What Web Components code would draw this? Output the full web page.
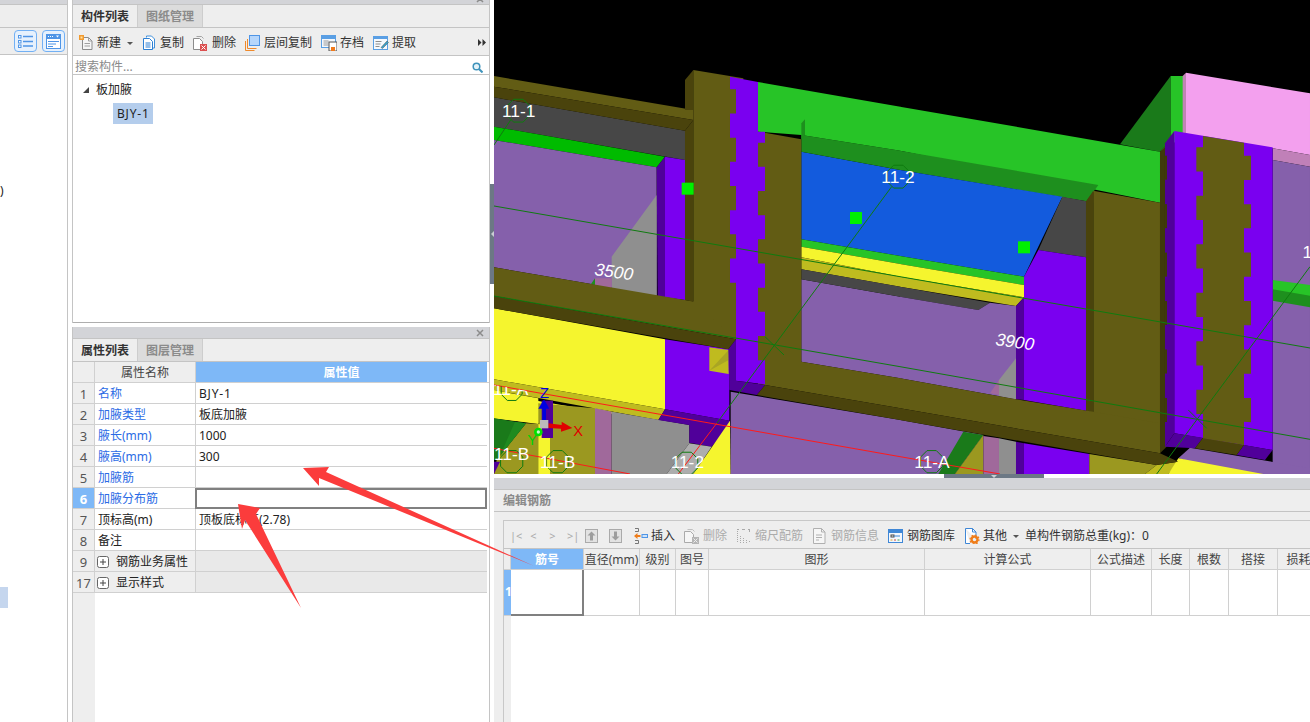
<!DOCTYPE html>
<html lang="zh">
<head>
<meta charset="utf-8">
<title>编辑钢筋</title>
<style>
  html, body { margin: 0; height: 100%; overflow: hidden; background: #fff; }
  body { font: 12px/1 "Noto Sans", "Noto Sans CJK SC", sans-serif; color: #222; }
</style>
</head>
<body>

<app-shell>
  <left-rail slot="rail"></left-rail>

  <dock-panel slot="comp" closable>
    <tab-strip first="构件列表" second="图纸管理"></tab-strip>
    <tool-bar>
      <tb-btn icon="new" arrow>新建</tb-btn>
      <tb-btn icon="copy">复制</tb-btn>
      <tb-btn icon="del">删除</tb-btn>
      <tb-btn icon="layer">层间复制</tb-btn>
      <tb-btn icon="save">存档</tb-btn>
      <tb-btn icon="extract">提取</tb-btn>
    </tool-bar>
    <search-box placeholder="搜索构件..."></search-box>
    <comp-tree></comp-tree>
  </dock-panel>

  <dock-panel slot="props" closable>
    <tab-strip first="属性列表" second="图层管理"></tab-strip>
    <prop-table>
      <prop-row num="1" label="名称" link><span style="letter-spacing:.8px">BJY-1</span></prop-row>
      <prop-row num="2" label="加腋类型" link>板底加腋</prop-row>
      <prop-row num="3" label="腋长(mm)" link>1000</prop-row>
      <prop-row num="4" label="腋高(mm)" link>300</prop-row>
      <prop-row num="5" label="加腋筋" link></prop-row>
      <prop-row num="6" label="加腋分布筋" link selected></prop-row>
      <prop-row num="7" label="顶标高(m)">顶板底标高(2.78)</prop-row>
      <prop-row num="8" label="备注"></prop-row>
      <prop-row num="9" label="钢筋业务属性" group></prop-row>
      <prop-row num="17" label="显示样式" group></prop-row>
    </prop-table>
  </dock-panel>

  <view-3d slot="view"></view-3d>
  <rebar-editor slot="editor"></rebar-editor>
  <red-arrows slot="overlay"></red-arrows>
</app-shell>

<script>
// small toolbar icons, all drawn on a 16 high box
const ICONS = {
  new: `<svg width="15" height="16" viewBox="0 0 15 16"><path d="M3.5 2.5h6l3.500 3.500v8.500h-9.500z" fill="#f6f6f6" stroke="#8d8d8d"/><path d="M9.500 2.500v3.500h3.500M5.500 8.500h5.500M5.500 11h5.500" fill="none" stroke="#a0a0a0"/><rect x="0" y="0" width="5" height="5" fill="#f29a2e"/><rect x="1.500" y="1.500" width="2" height="2" fill="#ffe2a8"/></svg>`,
  copy: `<svg width="15" height="16" viewBox="0 0 15 16"><path d="M4.500 2.500v-1.500h5l3 3v9h-2" fill="#fff" stroke="#3f8fdc"/><path d="M1.500 3.500h6l3 3v8h-9z" fill="#fff" stroke="#2d7fd3"/><path d="M3.500 8h5M3.500 10h5M3.500 12h5" stroke="#2d7fd3"/></svg>`,
  del: `<svg width="16" height="16" viewBox="0 0 16 16"><path d="M3.500 1.500h5l2 2" fill="none" stroke="#a4a4a4"/><path d="M.5 3.500h6l3 3v8h-9z" fill="#fff" stroke="#8c8c8c"/><rect x="7" y="9" width="7" height="7" fill="#dc5050"/><path d="M8.500 10.500l4 4m0-4l-4 4" stroke="#fff"/></svg>`,
  layer: `<svg width="16" height="16" viewBox="0 0 16 16"><rect x="4.500" y=".5" width="10" height="10" fill="#b6d6fb" stroke="#4f95e6"/><path d="M2.500 4v9.500h9M.5 6v9.500h9" fill="none" stroke="#ef8a2c"/></svg>`,
  save: `<svg width="16" height="16" viewBox="0 0 16 16"><rect x=".5" y=".5" width="14" height="12" fill="#f4f8fd" stroke="#5a9fe4"/><rect x="1" y="1" width="13" height="3" fill="#5a9fe4"/><path d="M2.500 6h5M2.500 8h5M2.500 10h5" stroke="#9a9a9a"/><rect x="8" y="7" width="8" height="9" fill="#fff" stroke="#555"/><rect x="10" y="12" width="4" height="4" fill="#f07a1c"/></svg>`,
  extract: `<svg width="16" height="16" viewBox="0 0 16 16"><rect x=".5" y="1.500" width="14" height="13" fill="#f6f9fd" stroke="#5a9fe4"/><rect x="1" y="2" width="13" height="2" fill="#5a9fe4"/><path d="M2.500 6.500h6M2.500 9h5M2.500 11.500h4" stroke="#8d8d8d"/><path d="M8 12.500l6-6.500 1.500 1.500-6 6z" fill="#3aa0c8" stroke="#555" stroke-width=".5"/></svg>`,
  up: `<svg width="13" height="14" viewBox="0 0 13 14"><rect x=".5" y=".5" width="12" height="13" fill="#e2e2e2" stroke="#aaa"/><path d="M6.500 2.500l4 4h-2.500v5h-3v-5h-2.500z" fill="#9d9d9d"/></svg>`,
  down: `<svg width="13" height="14" viewBox="0 0 13 14"><rect x=".5" y=".5" width="12" height="13" fill="#e2e2e2" stroke="#aaa"/><path d="M6.500 11.500l4-4h-2.500v-5h-3v5h-2.500z" fill="#9d9d9d"/></svg>`,
  insert: `<svg width="14" height="16" viewBox="0 0 14 16"><path d="M1 .5h3.500M4.500.5v3M1 3.500h3.500M1 12.500h3.500M4.500 12.500v3M1 15.500h3.500" fill="none" stroke="#777"/><path d="M0 8l3.500-3v2h3v2h-3v2z" fill="#ef7d1a"/><rect x="8" y="6.500" width="5.500" height="3" fill="#cfe4fb" stroke="#4f95e6"/></svg>`,
  delGray: `<svg width="16" height="16" viewBox="0 0 16 16"><path d="M3.500 1.500h5l2 2" fill="none" stroke="#c0c0c0"/><path d="M.5 3.500h6l3 3v8h-9z" fill="#f6f6f6" stroke="#aaa"/><rect x="8" y="9" width="7" height="7" fill="#b5b5b5"/><path d="M9.500 10.500l4 4m0-4l-4 4" stroke="#eee"/></svg>`,
  scale: `<svg width="16" height="16" viewBox="0 0 16 16"><path d="M1.500 3v12M4.500 8v7M7.500 10v5M10.500 12v3M13.500 13v2" stroke="#aaa" stroke-dasharray="1 1"/><path d="M1 1.500h2M6 1.500h3M12 1.500h2M13.500 1v3" stroke="#aaa"/></svg>`,
  info: `<svg width="16" height="16" viewBox="0 0 16 16"><path d="M1.500 .5h8l3.500 3.500v11.500h-11.500z" fill="#f6f6f6" stroke="#b0b0b0"/><path d="M9.500 .5v3.500h3.500M4 7h6M4 9.500h6M4 12h3" fill="none" stroke="#b0b0b0"/></svg>`,
  library: `<svg width="16" height="16" viewBox="0 0 16 16"><rect x=".5" y="1.500" width="14" height="13" fill="#f2f7fd" stroke="#3f87d6"/><rect x="1" y="2" width="13" height="3" fill="#3f87d6"/><rect x="3" y="7" width="3" height="2" fill="none" stroke="#444"/><path d="M6 8h6" stroke="#3f87d6"/><path d="M2.500 12h2" stroke="#e0a020"/><path d="M6 12h2" stroke="#d04040"/><path d="M9.500 12h2" stroke="#40a040"/></svg>`,
  other: `<svg width="16" height="16" viewBox="0 0 16 16"><path d="M1.500 .5h7l3.500 3.500v7M6 15.500h-4.500v-15" fill="#fff" stroke="#3f87d6"/><path d="M8.500 .5v3.500h3.500" fill="none" stroke="#3f87d6"/><circle cx="10.500" cy="11.500" r="3" fill="none" stroke="#ef7d1a" stroke-width="2.400"/><circle cx="10.500" cy="11.500" r="4.500" fill="none" stroke="#ef7d1a" stroke-width="1.200" stroke-dasharray="1.700 1.800"/></svg>`
};

const CLOSE = `<svg width="8" height="8" viewBox="0 0 8 8"><path d="M1 1l6 6m0-6l-6 6" stroke="#8c8c8c" stroke-width="1.500"/></svg>`;

class AppShell extends HTMLElement {
  connectedCallback() {
    this.attachShadow({ mode: 'open' });
    this.shadowRoot.innerHTML = `
      <style>
        :host { display: grid; grid-template-columns: 68px 4px 418px 4px 816px; width: 1310px; height: 722px; position: relative; overflow: hidden; }
        .rail { grid-column: 1; display: grid; min-height: 0; }
        .mid { grid-column: 3; display: grid; grid-template-rows: 330px 1fr; row-gap: 4px; margin-top: -7px; min-height: 0; }
        .split { grid-column: 4; }
        .split i { display: flex; align-items: center; justify-content: center; height: 100px; margin-top: 184px; background: #6c7885; }
        .split i::before { content: ""; border: solid transparent; border-width: 3px 3px 3px 0; border-right-color: #c9ced4; }
        .right { grid-column: 5; display: flex; flex-direction: column; min-height: 0; }
      </style>
      <div class="rail"><slot name="rail"></slot></div>
      <div class="mid"><slot name="comp"></slot><slot name="props"></slot></div>
      <div class="split"><i></i></div>
      <div class="right"><slot name="view"></slot><slot name="editor"></slot></div>
      <slot name="overlay"></slot>
    `;
  }
}

class LeftRail extends HTMLElement {
  connectedCallback() {
    this.attachShadow({ mode: 'open' });
    this.shadowRoot.innerHTML = `
      <style>
        :host { display: flex; flex-direction: column; border-right: 1px solid #c4c4c4; overflow: hidden; }
        .head { height: 4px; flex: none; background: #d3d4d8; border-bottom: 1px solid #c4c4c4; }
        .tabs { height: 22px; flex: none; background: #eee; border-bottom: 1px solid #c4c4c4; }
        .tools { height: 26px; flex: none; background: #eee; border-bottom: 1px solid #c4c4c4; display: flex; justify-content: flex-end; align-items: center; gap: 5px; padding-right: 2px; }
        .tools span { width: 21px; height: 20px; border: 1px solid #72b0f4; border-radius: 4px; background: #e6f1fd; display: flex; align-items: center; justify-content: center; }
        .clip { height: 21px; margin-top: 125px; line-height: 21px; font-size: 12px; }
        .sel { height: 21px; width: 8px; margin-top: 386px; background: #c5d6ee; }
      </style>
      <div class="head"></div>
      <div class="tabs"></div>
      <div class="tools">
        <span><svg width="15" height="15" viewBox="0 0 15 15"><g fill="#fff" stroke="#4f95e6"><rect x=".5" y="1.500" width="2.500" height="2.500"/><rect x=".5" y="6.500" width="2.500" height="2.500"/><rect x=".5" y="11" width="2.500" height="2.500"/></g><path d="M5 2.500h10M5 7.500h10M5 12h10" stroke="#4f95e6" stroke-width="1.300"/></svg></span>
        <span><svg width="15" height="15" viewBox="0 0 15 15"><rect x=".5" y=".5" width="14" height="14" fill="#fff" stroke="#4f95e6"/><rect x="0" y="0" width="15" height="5" fill="#4f95e6"/><path d="M2 2.500h1M4 2.500h1M6 2.500h1" stroke="#fff"/><path d="M10 1.500h3l-1.500 2z" fill="#fff"/><path d="M2 7.500h11M2 10h8M2 12.500h5" stroke="#4f95e6"/></svg></span>
      </div>
      <div class="clip">)</div>
      <div class="sel"></div>
    `;
  }
}

class DockPanel extends HTMLElement {
  connectedCallback() {
    this.attachShadow({ mode: 'open' });
    this.shadowRoot.innerHTML = `
      <style>
        :host { display: flex; flex-direction: column; min-height: 0; border: solid #c4c4c4; border-width: 0 1px; background: #fff; }
        .head { height: 11px; flex: none; background: #d3d4d8; border-bottom: 1px solid #c4c4c4; display: flex; align-items: center; justify-content: flex-end; padding-right: 5px; }
        ::slotted(:last-child) { flex: 1; min-height: 0; }
      </style>
      <div class="head">${CLOSE}</div>
      <slot></slot>
    `;
  }
}

class TabStrip extends HTMLElement {
  connectedCallback() {
    this.attachShadow({ mode: 'open' });
    this.shadowRoot.innerHTML = `
      <style>
        :host { display: flex; height: 22px; flex: none; background: #eee; border-bottom: 1px solid #c4c4c4; font-weight: 700; overflow: hidden; }
        span { padding: 0 8px; width: 48px; line-height: 24px; color: #333; }
        .off { background: #dcdcdc; color: #8b8b8b; border: solid #cdcdcd; border-width: 0 1px; }
      </style>
      <span>${this.getAttribute('first')}</span>
      <span class="off">${this.getAttribute('second')}</span>
    `;
  }
}

class ToolBar extends HTMLElement {
  connectedCallback() {
    this.attachShadow({ mode: 'open' });
    this.shadowRoot.innerHTML = `
      <style>
        :host { display: flex; align-items: center; gap: 9px; height: 25px; flex: none; padding: 2px 0 0 6px; background: #eee; border-bottom: 1px solid #c4c4c4; position: relative; }
        svg { position: absolute; right: 3px; top: 11px; }
      </style>
      <slot></slot>
      <svg width="8" height="7" viewBox="0 0 8 7"><path d="M0 0l3.500 3.500L0 7zM4.500 0L8 3.500 4.500 7z" fill="#333"/></svg>
    `;
  }
}

class TbBtn extends HTMLElement {
  connectedCallback() {
    this.attachShadow({ mode: 'open' });
    const arrow = this.hasAttribute('arrow') ? '<b></b>' : '';
    this.shadowRoot.innerHTML = `
      <style>
        :host { display: inline-flex; align-items: center; gap: 3px; white-space: nowrap; color: #333; line-height: 16px; }
        :host([off]) { color: #ababab; }
        svg { display: block; flex: none; }
        b { display: block; width: 0; height: 0; margin-left: 3px; margin-top: 1px; border: 3px solid transparent; border-top: 3px solid #555; border-bottom: 0; }
      </style>
      ${ICONS[this.getAttribute('icon')]}<slot></slot>${arrow}
    `;
  }
}

class SearchBox extends HTMLElement {
  connectedCallback() {
    this.attachShadow({ mode: 'open' });
    this.shadowRoot.innerHTML = `
      <style>
        :host { display: flex; align-items: center; justify-content: space-between; height: 14px; flex: none; padding: 4px 6px 0 2px; background: #fff; border-bottom: 1px solid #c4c4c4; color: #8a8a8a; }
      </style>
      <span>${this.getAttribute('placeholder')}</span>
      <svg width="11" height="11" viewBox="0 0 11 11"><circle cx="4.500" cy="4.500" r="3.300" fill="#e4f2f8" stroke="#3f93bb" stroke-width="1.500"/><path d="M7 7l3.500 3.500" stroke="#3f93bb" stroke-width="2"/></svg>
    `;
  }
}

class CompTree extends HTMLElement {
  connectedCallback() {
    this.attachShadow({ mode: 'open' });
    this.shadowRoot.innerHTML = `
      <style>
        :host { display: block; background: #fff; border-bottom: 1px solid #aeaeae; color: #222; }
        .root { display: flex; align-items: center; height: 21px; margin-top: 4px; padding-left: 10px; }
        .root i { width: 0; height: 0; border-style: solid; border-width: 0 0 6px 6px; border-color: transparent transparent #444 transparent; margin-right: 7px; }
        .leaf { display: inline-block; margin: 3px 0 0 40px; padding: 0 3px 0 4px; height: 21px; line-height: 21px; letter-spacing: .8px; background: #b4cdec; }
      </style>
      <div class="root"><i></i>板加腋</div>
      <div class="leaf">BJY-1</div>
    `;
  }
}

class PropTable extends HTMLElement {
  connectedCallback() {
    this.attachShadow({ mode: 'open' });
    this.shadowRoot.innerHTML = `
      <style>
        :host { display: block; background: linear-gradient(90deg, #eee 22px, #fff 22px); }
        .hd { display: grid; grid-template-columns: 22px 101px 291px; height: 20px; border-bottom: 1px solid #d0d0d0; line-height: 22px; text-align: center; overflow: hidden; }
        .hd span { background: #eee; border-right: 1px solid #d0d0d0; color: #444; }
        .hd .val { background: #7eb8f7; color: #fff; font-weight: 700; border: 0; }
      </style>
      <div class="hd"><span></span><span>属性名称</span><span class="val">属性值</span></div>
      <slot></slot>
    `;
  }
}

class PropRow extends HTMLElement {
  connectedCallback() {
    this.attachShadow({ mode: 'open' });
    const label = this.getAttribute('label');
    const plus = this.hasAttribute('group')
      ? '<svg width="12" height="12" viewBox="0 0 12 12"><rect x=".5" y=".5" width="11" height="11" rx="2" fill="#fff" stroke="#666"/><path d="M3 6h6M6 3v6" stroke="#444"/></svg>'
      : '';
    this.shadowRoot.innerHTML = `
      <style>
        :host { display: grid; grid-template-columns: 22px 101px 291px; height: 20px; width: 414px; border-bottom: 1px solid #d0d0d0; line-height: 22px; }
        div { border-right: 1px solid #d0d0d0; white-space: nowrap; overflow: hidden; }
        .num { background: #eee; text-align: center; color: #555; font-size: 13px; }
        .name { padding-left: 3px; display: flex; align-items: flex-start; gap: 7px; }
        .name svg { align-self: center; margin-top: 1px; flex: none; }
        .val { padding-left: 3px; border-right: 0; background: #fff; }
        :host([link]) .name { color: #2b6be5; }
        :host([group]) .name { background: #eee; padding-left: 2px; }
        :host([group]) .val { background: #e9e9e9; }
        :host([selected]) .num { background: #7eb8f7; color: #fff; font-weight: 700; }
        :host([selected]) .val { border: 2px solid #808080; margin: 0 0 -1px -1px; }
      </style>
      <div class="num">${this.getAttribute('num')}</div>
      <div class="name">${plus}${label}</div>
      <div class="val"><slot></slot></div>
    `;
  }
}

class View3d extends HTMLElement {
  // serrated edge: n steps of the given length, walked from the top down
  teeth(x1, x2, y, step, n) {
    const pts = [];
    let cur = y;
    for (let i = 0; i < n; i++) {
      const x = i % 2 ? x2 : x1;
      pts.push([x, cur], [x, cur + step]);
      cur += step;
    }
    return pts;
  }

  connectedCallback() {
    this.attachShadow({ mode: 'open' });
    const olive = '#625c14', oliveD = '#4a430c', vio = '#7a00f0', vioD = '#50009a', wall = '#8560ab',
      grn = '#27c427', grnD = '#1e8f1e', yel = '#f5f52e', yelD = '#bfbb1f', mus = '#9b9820', gray = '#474747', lgray = '#8f8f8f';
    const p = (pts, fill) => `<polygon points="${pts}" fill="${fill}"/>`;

    const oct = (x, y, r) => {
      const pts = [];
      for (let i = 0; i < 8; i++) {
        const a = Math.PI / 8 + i * Math.PI / 4;
        pts.push((x + r * Math.cos(a)).toFixed(1) + ',' + (y + r * Math.sin(a)).toFixed(1));
      }
      return `<polygon points="${pts.join(' ')}" fill="none" stroke="#0f7a0f" stroke-width="3"/>`;
    };
    const label = (txt, x, y) => `<text x="${x}" y="${y}" class="lb">${txt}</text>`;
    const mark = (x, y) => `<rect x="${x}" y="${y}" width="36" height="36" fill="#00f000"/>`;

    // centre strip of the left column
    const stripL = [[720, 50], [720, 88]].concat(this.teeth(738, 720, 88, 72.500, 9), [[738, 962]]);
    const stripR = [[804, 66], [804, 215], [825, 215], [825, 248]].concat(this.teeth(804, 825, 248, 72.500, 10));
    const strip = stripL.concat(stripR.reverse()).map(a => a.join(',')).join(' ');

    // centre olive strip of the right column
    const midL = [[909, 228], [909, 262]].concat(this.teeth(889, 909, 262, 72.700, 12), [[909, 1135]]);
    const midR = [[1032, 248], [1032, 287]].concat(this.teeth(1053, 1032, 287, 72.700, 11), [[1032, 1085], [1032, 1155]]);
    const mid = midL.concat(midR.reverse()).map(a => a.join(',')).join(' ');

    // dark notches down the left side of the right column
    let notches = '';
    for (let i = 0; i < 6; i++) notches += `<rect x="795" y="${287 + 145.400 * i}" width="6" height="72" fill="#3f3a0a"/>`;

    const leftGroup = [
      p('12,112 585,212 585,300 12,200', gray),
      p('12,200 525,290 500,322 12,240', '#00bb00'),
      p('12,240 500,322 500,706 12,622', wall),
      p('500,405 365,590 365,690 500,710', lgray),
      p('315,655 365,655 365,690 315,675', '#a0699b'),
      p('303,672 315,655 315,675', '#1e8f1e'),
      p('525,290 585,300 585,720 525,712', vio),
      p('500,322 525,290 525,712 503,708', vioD),
      // under the lower beam
      p('12,745 525,838 525,1048 12,958', yel),
      p('12,958 525,1048 505,1080 12,990', yelD),
      p('12,1000 505,1085 315,1045 145,1090 12,1075', yel),
      p('12,990 145,1015 145,1092 12,1075', yel),
      p('108,1090 145,1092 145,1242 12,1242 20,1200', mus),
      p('12,1075 108,1090 20,1200 12,1200', '#1a7a1a'),
      p('75,1085 108,1090 30,1188', '#1f8a1f'),
      p('12,1205 30,1205 12,1242', vioD),
      p('145,1030 315,1045 315,1242 145,1242', mus),
      p('145,1092 180,1098 180,1242 145,1242', yel),
      p('315,1045 365,1055 365,1242 315,1242', '#a0699b'),
      p('365,1055 598,1095 598,1150 530,1242 365,1242', lgray),
      p('525,838 718,868 718,1082 525,1048', vio),
      p('525,1048 720,1082 720,1095 665,1160 598,1148 598,1095 505,1080', vioD),
      p('598,1150 665,1160 610,1242 530,1242', '#adadad'),
      p('720,1082 722,1242 610,1242', yel),
      p('722,995 1231,1080 1231,1242 722,1242', wall),
      p('658,862 716,870 716,942 658,932', yelD),
      p('716,870 716,900 658,932', '#a9a524'),
      // lower beam
      p('12,622 585,720 738,745 738,838 12,708', olive),
      p('12,708 738,838 715,868 12,745', oliveD),
      // top beam
      p('12,48 610,150 610,180 12,80', olive),
      p('12,80 610,180 585,212 12,112', oliveD),
      // left column
      p('585,60 610,30 610,150 585,150', oliveD),
      p('585,212 610,180 610,725 585,720', oliveD),
      p('610,30 760,55 760,840 738,838 610,725', olive),
      // right part past the column
      p('934,658 1231,710 1231,955 934,905', wall),
      p('934,275 1231,330 1231,588 934,538', '#135bdd'),
      p('934,538 1231,588 1231,612 934,560', grn),
      p('934,560 1231,612 1231,650 934,592', yel),
      p('934,592 1231,650 1231,680 934,628', yelD),
      p('934,628 1231,680 1231,710 934,658', gray),
      p('934,225 1231,272 1231,330 934,275', grnD),
      p('804,66 1231,140 1231,272 934,225 804,215', grn),
      p('934,190 945,178 945,225 934,238', grnD),
      p('804,215 934,238 934,905 1231,955 1231,1045 825,975 804,972', olive),
      p('825,975 1231,1045 1231,1080 800,1005', oliveD),
      // purple strip with its foot
      p('738,838 715,868 718,990 738,962', vioD),
      p('720,960 825,975 800,1005 718,990', vioD),
      `<polygon points="${strip}" fill="${vio}"/>`
    ].join('');

    const rightGroup = [
      p('660,253 812,48 812,240 780,275', '#1a7a1a'),
      p('812,48 850,48 850,230 780,275 812,240', grn),
      p('858,38 1230,100 1230,285 1118,265 858,228', '#f3a0ee'),
      p('848,48 858,38 858,228 848,218', '#c084b5'),
      p('1118,265 1230,285 1230,320 1118,300', '#c080b8'),
      p('1118,300 1230,320 1230,1242 1118,1242', wall),
      p('1118,660 1230,675 1230,712 1118,692', grn),
      p('1118,688 1230,707 1230,742 1118,722', grnD),
      p('0,140 780,275 780,428 0,272', grn),
      p('0,272 595,375 560,424 0,330', grnD),
      p('0,330 487,410 372,650 0,588', '#135bdd'),
      p('0,588 372,650 372,675 0,612', grn),
      p('0,612 372,675 372,712 0,650', yel),
      p('0,650 372,712 348,738 0,680', yelD),
      p('0,680 270,728 235,750 0,710', gray),
      p('487,410 560,424 558,592 415,570', gray),
      p('0,710 235,750 270,728 348,738 348,1018 0,955', wall),
      p('348,895 348,1018 297,1008 297,960', lgray),
      p('270,1000 297,960 297,1005', '#a0699b'),
      p('415,570 558,592 558,1052 372,1020 372,650', vio),
      p('372,712 348,738 348,1018 372,1020', vioD),
      p('558,424 580,392 580,1058 558,1052', oliveD),
      p('580,392 780,428 780,1180 580,1058', olive),
      p('0,955 348,1018 580,1055 780,1090 780,1180 0,1045', olive),
      // below the beam
      p('0,1080 250,1125 165,1242 0,1242', wall),
      p('190,1115 250,1125 165,1242 115,1242', '#1a7a1a'),
      p('250,1125 250,1242 165,1242', mus),
      p('250,1128 297,1135 297,1242 250,1242', '#a0699b'),
      p('297,1135 348,1145 348,1242 297,1242', lgray),
      p('348,1145 372,1150 372,1242 348,1242', vioD),
      p('372,1150 568,1182 568,1242 372,1242', vio),
      p('568,1182 770,1215 735,1242 568,1242', mus),
      p('770,1215 835,1205 805,1242 735,1242', yelD),
      p('870,1163 1230,1225 1230,1242 1000,1242 835,1195', wall),
      p('835,1195 1090,1242 805,1242', yel),
      p('0,1045 780,1180 835,1205 770,1215 0,1080', oliveD),
      // right column
      p('780,275 800,255 800,1160 780,1180', '#3f3a0a'),
      p('795,250 823,213 823,1120 795,1160', vioD),
      notches,
      p('823,213 1118,262 1118,1170 823,1120', vio),
      p('823,1120 909,1133 885,1165 795,1160', vioD),
      p('1032,1155 1118,1170 1095,1200 1010,1185', vioD),
      p('909,1133 1032,1155 1010,1185 885,1165', oliveD),
      `<polygon points="${mid}" fill="${olive}"/>`
    ].join('');

    this.shadowRoot.innerHTML = `
      <style>
        :host { display: block; height: 474px; flex: none; background: #000; overflow: hidden; }
        svg { display: block; }
        .lb { font: 52px "Liberation Sans", sans-serif; fill: #fff; text-anchor: middle; }
        .dim { font: italic 52px "Liberation Sans", sans-serif; fill: #fff; }
        .ax { font: 44px "Liberation Sans", sans-serif; }
      </style>
      <svg width="816" height="474" viewBox="494 0 816 474">
        <defs>
          <clipPath id="belowStrip"><polygon points="12,975 140,998 140,1060 12,1060"/></clipPath>
        </defs>
        <rect x="494" y="0" width="816" height="474" fill="#000"/>
        <g transform="translate(490 60) scale(.33333)">
          ${leftGroup}
          ${mark(575, 368)}${mark(1080, 456)}
        </g>
        <g transform="translate(900 60) scale(.33333)">
          ${rightGroup}
          ${mark(354, 544)}
          <line x1="0" y1="650" x2="1230" y2="864" stroke="#0f7a0f" stroke-width="3"/>
          <line x1="0" y1="920" x2="1230" y2="1138" stroke="#0f7a0f" stroke-width="3"/>
          <line x1="0" y1="1190" x2="300" y2="1242" stroke="#ff1a1a" stroke-width="3"/>
          <line x1="1230" y1="620" x2="770" y2="1242" stroke="#0f7a0f" stroke-width="3"/>
          <path d="M865 1050L920 1105" stroke="#0f7a0f" stroke-width="3"/>
          <text class="dim" transform="translate(285 855) rotate(8)">3900</text>
          ${oct(95, 1205, 36)}${label('11-A', 96, 1225)}
          ${label('1', 1222, 595)}
        </g>
        <g transform="translate(490 60) scale(.33333)">
          <line x1="12" y1="438" x2="1230" y2="650" stroke="#0f7a0f" stroke-width="3"/>
          <line x1="12" y1="708" x2="1230" y2="920" stroke="#0f7a0f" stroke-width="3"/>
          <line x1="12" y1="975" x2="1230" y2="1190" stroke="#ff1a1a" stroke-width="3"/>
          <line x1="12" y1="1165" x2="420" y2="1242" stroke="#ff1a1a" stroke-width="3"/>
          <line x1="1205" y1="380" x2="680" y2="1090" stroke="#0f7a0f" stroke-width="3"/>
          <line x1="680" y1="1090" x2="565" y2="1242" stroke="#ff1a1a" stroke-width="3"/>
          <line x1="62" y1="180" x2="12" y2="255" stroke="#0f7a0f" stroke-width="3"/>
          <path d="M825 830L882 885" stroke="#0f7a0f" stroke-width="3"/>
          <text class="dim" transform="translate(312 645) rotate(8)">3500</text>
          ${oct(85, 152, 37)}${label('11-1', 86, 170)}
          ${oct(1225, 350, 37)}${label('11-2', 1224, 370)}
          <g clip-path="url(#belowStrip)">${oct(65, 990, 34)}${label('11-A', 62, 1005)}</g>
          ${oct(65, 1205, 36)}${label('11-B', 65, 1200)}
          ${oct(203, 1205, 36)}${label('11-B', 203, 1225)}
          ${oct(590, 1210, 36)}${label('11-2', 592, 1225)}
          <!-- axis gizmo -->
          <rect x="155" y="1022" width="34" height="112" fill="${vioD}"/>
          <rect x="157" y="1040" width="11" height="42" fill="#0000e0"/>
          <path d="M145 1046L162 1018 178 1046z" fill="#0000e0"/>
          <path d="M175 1090L215 1095 215 1085 247 1104 213 1115 213 1106 175 1104z" fill="#e00000"/>
          <rect x="150" y="1080" width="25" height="25" fill="#bbb"/>
          <circle cx="145" cy="1116" r="13" fill="#00e000"/>
          <circle cx="145" cy="1116" r="5" fill="#c9f5c9"/>
          <text class="ax" x="150" y="1015" fill="#0000e0">Z</text>
          <text class="ax" x="250" y="1127" fill="#e00000">X</text>
          <text class="ax" x="112" y="1155" fill="#00d000">Y</text>
        </g>
      </svg>
    `;
  }
}

class RebarEditor extends HTMLElement {
  connectedCallback() {
    this.attachShadow({ mode: 'open' });
    const cols = ['', '筋号', '直径(mm)', '级别', '图号', '图形', '计算公式', '公式描述', '长度', '根数', '搭接', '损耗'];
    const hd = cols.map((c, i) => `<span class="${i === 1 ? 'on' : ''}">${c}</span>`).join('');
    const row = cols.map((c, i) => i === 0 ? '<span class="idx">1</span>' : `<span class="${i === 1 ? 'cur' : ''}"></span>`).join('');
    this.shadowRoot.innerHTML = `
      <style>
        :host { display: flex; flex-direction: column; flex: 1; min-height: 0; background: #eee; }
        .gap { height: 4px; flex: none; background: #fff; }
        .gap i { display: flex; justify-content: center; width: 100px; height: 4px; margin-left: 450px; background: #6c7885; }
        .gap i::before { content: ""; margin-top: 1px; height: 0; border: solid transparent; border-width: 3px 3px 0; border-top-color: #c9ced4; }
        .head { height: 11px; flex: none; background: #d3d4d8; border-bottom: 1px solid #c4c4c4; }
        .title { height: 21px; flex: none; padding-left: 9px; line-height: 21px; color: #8a8a8a; font-weight: 700; border-bottom: 1px solid #c4c4c4; }
        .inner { flex: 1; margin: 8px 0 0 9px; min-height: 0; background: #fff; border: solid #c8c8c8; border-width: 1px 0 0 1px; display: flex; flex-direction: column; overflow: hidden; }
        .bar { height: 25px; flex: none; background: #eee; border-bottom: 1px solid #c4c4c4; display: flex; align-items: center; gap: 9px; padding: 2px 0 0 6px; white-space: nowrap; }
        .nav { display: flex; width: 66px; justify-content: space-between; color: #aaa; font-size: 11px; }
        .nav span { width: 9px; text-align: center; }
        .arrows { display: flex; gap: 11px; margin-right: 3px; }
        .total { color: #333; margin-left: -3px; }
        .row { display: grid; grid-template-columns: 7px 73px 56px 36px 33px 216px 166px 61px 38px 39px 49px 42px; flex: none; }
        .row span { border-right: 1px solid #d0d0d0; border-bottom: 1px solid #d0d0d0; box-sizing: border-box; text-align: center; overflow: hidden; white-space: nowrap; }
        .hd { height: 21px; line-height: 22px; }
        .hd span { background: #eee; color: #444; }
        .hd .on { background: #7eb8f7; color: #fff; font-weight: 700; }
        .bd { height: 46px; }
        .bd .idx { background: #7eb8f7; color: #fff; font-weight: 700; line-height: 44px; border-right: 0; text-align: left; padding-left: 1px; }
        .bd .cur { border-right: 2px solid #808080; border-bottom: 2px solid #808080; }
        .tail { flex: 1; width: 7px; background: #eee; }
      </style>
      <div class="gap"><i></i></div>
      <div class="head"></div>
      <div class="title">编辑钢筋</div>
      <div class="inner">
        <div class="bar">
          <div class="nav"><span>|&lt;</span><span>&lt;</span><span>&gt;</span><span>&gt;|</span></div>
          <div class="arrows">
            <tb-btn icon="up" off></tb-btn>
            <tb-btn icon="down" off></tb-btn>
          </div>
          <tb-btn icon="insert">插入</tb-btn>
          <tb-btn icon="delGray" off>删除</tb-btn>
          <tb-btn icon="scale" off>缩尺配筋</tb-btn>
          <tb-btn icon="info" off>钢筋信息</tb-btn>
          <tb-btn icon="library">钢筋图库</tb-btn>
          <tb-btn icon="other" arrow>其他</tb-btn>
          <span class="total">单构件钢筋总重(kg)：0</span>
        </div>
        <div class="row hd">${hd}</div>
        <div class="row bd">${row}</div>
        <div class="tail"></div>
      </div>
    `;
  }
}

class RedArrows extends HTMLElement {
  connectedCallback() {
    this.attachShadow({ mode: 'open' });
    this.shadowRoot.innerHTML = `
      <style>
        :host { position: absolute; left: 0; top: 0; width: 1310px; height: 722px; pointer-events: none; }
        svg { display: block; }
      </style>
      <svg width="1310" height="722" viewBox="0 0 1310 722">
        <polygon points="303,468 329,467 326,472 534,566 319,478 319,486" fill="#fb3c3c"/>
        <polygon points="238,504 260,508 256,514 301,608 245,520 242,529" fill="#fb3c3c"/>
      </svg>
    `;
  }
}

customElements.define('app-shell', AppShell);
customElements.define('left-rail', LeftRail);
customElements.define('dock-panel', DockPanel);
customElements.define('tab-strip', TabStrip);
customElements.define('tool-bar', ToolBar);
customElements.define('tb-btn', TbBtn);
customElements.define('search-box', SearchBox);
customElements.define('comp-tree', CompTree);
customElements.define('prop-table', PropTable);
customElements.define('prop-row', PropRow);
customElements.define('view-3d', View3d);
customElements.define('rebar-editor', RebarEditor);
customElements.define('red-arrows', RedArrows);
</script>
</body>
</html>
